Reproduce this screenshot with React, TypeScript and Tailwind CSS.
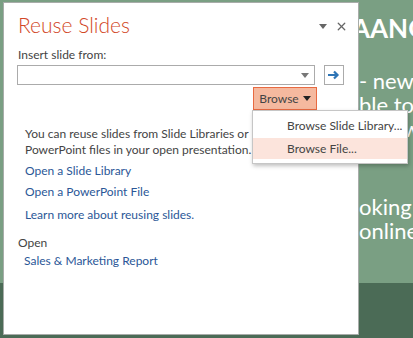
import { X } from "lucide-react";

const font = { fontFamily: "Lato, 'Open Sans', sans-serif" };

function Caret({ className = "" }: { className?: string }) {
  return (
    <svg width="8" height="5" viewBox="0 0 8 5" className={className}>
      <path d="M0 0h8L4 5z" fill="currentColor" />
    </svg>
  );
}

export default function App() {
  return (
    <div className="relative h-[338px] w-[413px] overflow-hidden bg-[#7a9f83]" style={font}>
      {/* slide behind the pane */}
      <div className="absolute left-0 right-0 top-[283px] bottom-0 bg-[#4b6b56]" />
      <div className="absolute left-[352px] top-[13px] whitespace-nowrap text-[26px] font-bold leading-[30px] text-white">
        AANG
      </div>
      <div className="absolute left-[359px] top-[69px] whitespace-nowrap text-[22px] leading-[24px] text-white">
        <p>- new</p>
        <p>ble to</p>
        <p className="pl-[44px]">w</p>
      </div>
      <div className="absolute left-[359px] top-[195px] whitespace-nowrap text-[22px] leading-[24px] text-white">
        <p>oking</p>
        <p>online</p>
      </div>

      {/* task pane */}
      <div className="relative ml-[3px] mt-[2px] h-[333px] w-[356px] border border-[#a8aca9] bg-white">
        <div className="flex items-start justify-between pl-[14px] pr-[10px] pt-[9px]">
          <h1 className="text-[21px] font-light leading-[26px] text-[#d24726]">Reuse Slides</h1>
          <div className="mt-[8px] flex items-center gap-[8px] text-[#666]">
            <Caret />
            <X size={13} strokeWidth={2.4} />
          </div>
        </div>

        <p className="mt-[9px] pl-[14px] text-[12px] leading-[15px] text-[#444]">Insert slide from:</p>

        <div className="mt-[3px] flex items-center gap-[9px] pl-[13px]">
          <div className="flex h-[20px] w-[298px] items-center justify-end border border-[#ababab] pr-[5px] text-[#777]">
            <Caret />
          </div>
          <div className="flex h-[20px] w-[20px] items-center justify-center border border-[#ababab]">
            <svg width="12" height="10" viewBox="0 0 12 10">
              <path d="M0 5h9M6 1.5 9.5 5 6 8.5" fill="none" stroke="#2e75b6" strokeWidth="2.2" />
            </svg>
          </div>
        </div>

        <div className="mt-[2px] flex justify-end pr-[41px]">
          <button className="flex h-[23px] w-[64px] items-center justify-center gap-[4px] border border-[#e86a41] bg-[#f5b99f] text-[12px] text-[#444]">
            Browse
            <Caret className="text-[#222]" />
          </button>
        </div>

        <div className="mt-[16px] pl-[21px] text-[12px] leading-[16px] text-[#444]">
          <p>You can reuse slides from Slide Libraries or</p>
          <p>PowerPoint files in your open presentation.</p>
        </div>

        <div className="mt-[5px] flex flex-col gap-[5px] pl-[21px] text-[12px] leading-[16px] text-[#2b5797]">
          <a>Open a Slide Library</a>
          <a>Open a PowerPoint File</a>
          <a className="mt-[2px]">Learn more about reusing slides.</a>
        </div>

        <p className="mt-[12px] pl-[14px] text-[12px] leading-[16px] text-[#444]">Open</p>
        <a className="mt-[2px] block pl-[20px] text-[12px] leading-[16px] text-[#2b5797]">Sales &amp; Marketing Report</a>
      </div>

      {/* browse menu */}
      <div className="absolute left-[252px] top-[110px] w-[156px] border border-[#c6c6c6] bg-white py-[4px] text-[12px] leading-[16px] text-[#444] shadow-[1px_2px_4px_rgba(0,0,0,0.25)]">
        <div className="flex h-[21px] items-center pl-[34px]">Browse Slide Library...</div>
        <div className="mt-[2px] flex h-[21px] items-center bg-[#fce4dc] pl-[34px]">Browse File...</div>
      </div>
    </div>
  );
}
